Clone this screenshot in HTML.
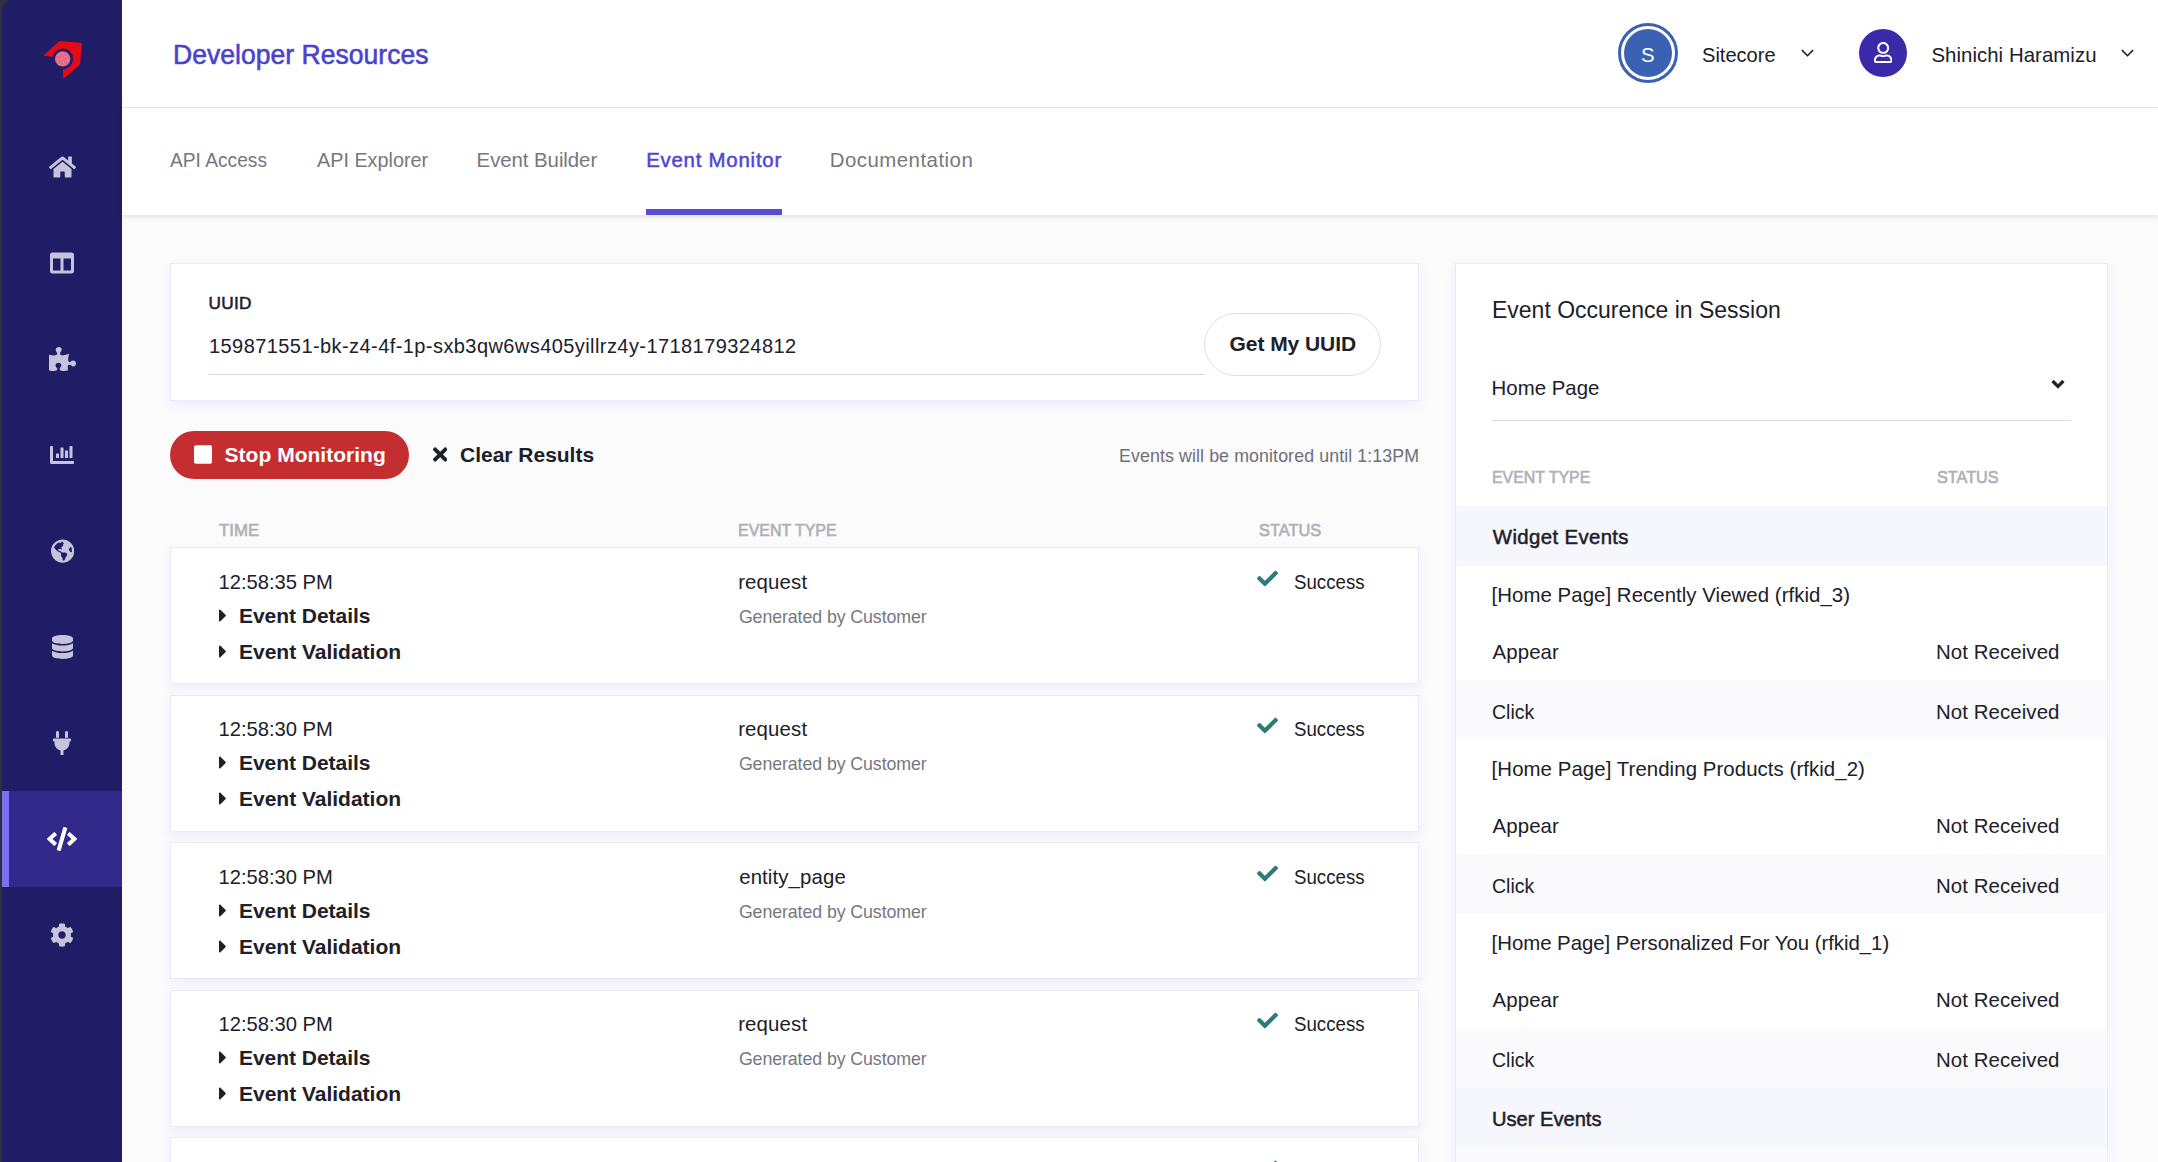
<!DOCTYPE html>
<html lang="en">
<head>
<meta charset="utf-8">
<title>Developer Resources - Event Monitor</title>
<style>
*{box-sizing:border-box;margin:0;padding:0}
html,body{width:2158px;height:1162px;overflow:hidden}
body{position:relative;background:#fbfbfc;font-family:"Liberation Sans",sans-serif;color:#1f1f29}
a{text-decoration:none}
h1,h2{font-weight:400}
.t{position:absolute;white-space:nowrap;display:block}
#edge{position:absolute;left:0;top:0;width:12px;height:1162px;background:#2e303e}
#side{position:absolute;left:2px;top:0;width:120px;height:1162px;background:#211c66;clip-path:polygon(0 9px,1px 6px,3px 3.4px,5.4px 1.4px,8px 0,100% 0,100% 100%,0 100%)}
#side ul{list-style:none}
#side .act{position:absolute;left:0;top:791px;width:120px;height:96px;background:#32298a;border-left:7px solid #7c6ff1}
#side svg{fill:#c6c4dc}
#side svg.on{fill:#fff}
#hdr{position:absolute;left:122px;top:0;width:2036px;height:108px;background:#fff;border-bottom:1px solid #e9e9ea}
#tabs{position:absolute;left:122px;top:108px;width:2036px;height:107px;background:#fff;box-shadow:0 2px 5px rgba(0,0,0,.11)}
#tabs .bar{position:absolute;left:524px;top:101px;width:136px;height:6px;background:#574bd8}
.card{position:absolute;background:#fff;border:1px solid #ebeafa;box-shadow:0 4px 10px rgba(110,100,230,.09)}
.ring{position:absolute;left:1496px;top:23px;width:60px;height:60px;border-radius:50%;border:3px solid #3b61b3;background:#fff}
.ring i{position:absolute;left:3px;top:3px;width:48px;height:48px;border-radius:50%;background:#3b61b3}
.uav{position:absolute;left:1737px;top:29px;width:48px;height:48px;border-radius:50%;background:#3a29a8}
.line{position:absolute;height:1px;background:#d9d9de}
.pill{position:absolute;border-radius:40px}
.stripe{position:absolute;left:0;width:651px}
</style>
</head>
<body>
<div id="edge"></div>
<nav id="side">
<div class="act"></div>
<svg viewBox="0 0 120 108" style="position:absolute;left:0;top:0;width:120px;height:108px" aria-hidden="true"><polygon points="41.4,55.4 57.3,41 79.9,43.1 78.1,64.5 61.3,78.9 60.7,68 60.7,58.9 50,56.8" fill="#e60a17"/><circle cx="60.7" cy="58.9" r="10.5" fill="#211c66"/><circle cx="60.7" cy="58.9" r="7.7" fill="#e36c8b"/><g fill="#f5c24a"><circle cx="60.5" cy="53.4" r=".5"/><circle cx="56.6" cy="55.6" r=".5"/><circle cx="63.5" cy="56.5" r=".5"/><circle cx="59.5" cy="58.5" r=".5"/><circle cx="55.5" cy="60.4" r=".5"/><circle cx="65.5" cy="60.4" r=".5"/><circle cx="61.5" cy="62.5" r=".5"/><circle cx="57.5" cy="64.6" r=".5"/></g></svg>
<ul>
<li><svg viewBox="0 0 576 512" style="position:absolute;left:46.90px;top:155.00px;width:27.00px;height:24.00px" aria-hidden="true"><path d="M280.37 148.26L96 300.11V464a16 16 0 0 0 16 16l112.06-.29a16 16 0 0 0 15.92-16V368a16 16 0 0 1 16-16h64a16 16 0 0 1 16 16v95.64a16 16 0 0 0 16 16.05L464 480a16 16 0 0 0 16-16V300L295.67 148.26a12.19 12.19 0 0 0-15.3 0zM571.6 251.47L488 182.56V44.05a12 12 0 0 0-12-12h-56a12 12 0 0 0-12 12v72.61L318.47 43a48 48 0 0 0-61 0L4.34 251.47a12 12 0 0 0-1.6 16.9l25.5 31A12 12 0 0 0 45.15 301l235.22-193.74a12.19 12.19 0 0 1 15.3 0L530.9 301a12 12 0 0 0 16.9-1.6l25.5-31a12 12 0 0 0-1.7-16.93z"/></svg></li>
<li><svg viewBox="0 0 512 512" style="position:absolute;left:48.40px;top:251.00px;width:24.00px;height:24.00px" aria-hidden="true"><path d="M464 32H48C21.49 32 0 53.49 0 80v352c0 26.51 21.49 48 48 48h416c26.51 0 48-21.49 48-48V80c0-26.51-21.49-48-48-48zM224 416H64V160h160v256zm224 0H288V160h160v256z"/></svg></li>
<li><svg viewBox="0 0 576 512" style="position:absolute;left:46.90px;top:347.00px;width:27.00px;height:24.00px" aria-hidden="true"><path d="M519.442 288.651c-41.519 0-59.5 31.593-82.058 31.593C377.409 320.244 432 144 432 144s-196.288 80-196.288-3.297c0-35.827 36.288-46.25 36.288-85.985C272 19.216 243.885 0 210.539 0c-34.654 0-66.366 18.891-66.366 56.346 0 41.364 31.711 59.277 31.711 81.75C175.885 207.719 0 166.758 0 166.758v333.237s178.635 41.047 178.635-28.662c0-22.473-40-40.107-40-81.471 0-37.456 29.25-56.346 63.577-56.346 33.673 0 61.788 19.216 61.788 54.717 0 39.735-36.288 50.158-36.288 85.985 0 60.803 129.675 25.73 181.23 25.73 0 0-34.725-120.101 25.827-120.101 35.962 0 46.423 36.152 86.308 36.152C556.712 416 576 387.99 576 354.443c0-34.199-18.962-65.792-56.558-65.792z"/></svg></li>
<li><svg viewBox="0 0 512 512" style="position:absolute;left:48.40px;top:443.00px;width:24.00px;height:24.00px" aria-hidden="true"><path d="M332.8 320h38.4c6.4 0 12.8-6.4 12.8-12.8V172.8c0-6.4-6.4-12.8-12.8-12.8h-38.4c-6.4 0-12.8 6.4-12.8 12.8v134.4c0 6.4 6.4 12.8 12.8 12.8zm96 0h38.4c6.4 0 12.8-6.4 12.8-12.8V76.8c0-6.4-6.4-12.8-12.8-12.8h-38.4c-6.4 0-12.8 6.4-12.8 12.8v230.4c0 6.4 6.4 12.8 12.8 12.8zm-288 0h38.4c6.4 0 12.8-6.4 12.8-12.8v-70.4c0-6.4-6.4-12.8-12.8-12.8h-38.4c-6.4 0-12.8 6.4-12.8 12.8v70.4c0 6.4 6.4 12.8 12.8 12.8zm96 0h38.4c6.4 0 12.8-6.4 12.8-12.8V108.8c0-6.4-6.4-12.8-12.8-12.8h-38.4c-6.4 0-12.8 6.4-12.8 12.8v198.4c0 6.4 6.4 12.8 12.8 12.8zM496 384H64V80c0-8.84-7.16-16-16-16H16C7.16 64 0 71.16 0 80v336c0 17.67 14.33 32 32 32h464c8.84 0 16-7.16 16-16v-32c0-8.84-7.16-16-16-16z"/></svg></li>
<li><svg viewBox="0 0 496 512" style="position:absolute;left:48.67px;top:539.00px;width:23.25px;height:24.00px" aria-hidden="true"><path d="M248 8C111.03 8 0 119.03 0 256s111.03 248 248 248 248-111.03 248-248S384.97 8 248 8zm82.29 357.6c-3.9 3.88-7.99 7.95-11.31 11.28-2.99 3-5.1 6.7-6.17 10.71-1.51 5.66-2.73 11.38-4.77 16.87l-17.39 46.85c-13.76 3-28 4.69-42.65 4.69v-27.38c1.69-12.62-7.64-36.26-22.63-51.25-6-6-9.37-14.14-9.37-22.63v-32.01c0-11.64-6.27-22.34-16.46-27.97-14.37-7.95-34.81-19.06-48.81-26.11-11.48-5.78-22.1-13.14-31.65-21.75l-.8-.72a114.792 114.792 0 0 1-18.06-20.74c-9.38-13.77-24.66-36.42-34.59-51.14 20.47-45.5 57.36-82.04 103.2-101.89l24.01 12.01C203.48 89.74 216 82.01 216 70.11v-11.3c7.99-1.29 16.12-2.11 24.39-2.42l28.3 28.3c6.25 6.25 6.25 16.38 0 22.63L264 112l-10.34 10.34c-3.12 3.12-3.12 8.19 0 11.31l4.69 4.69c3.12 3.12 3.12 8.19 0 11.31l-8 8a8.008 8.008 0 0 1-5.66 2.34h-8.99c-2.08 0-4.08.81-5.58 2.27l-9.92 9.65a8.008 8.008 0 0 0-1.58 9.31l15.59 31.19c2.66 5.32-1.21 11.58-7.15 11.58h-5.64c-1.93 0-3.79-.7-5.24-1.96l-9.28-8.06a16.017 16.017 0 0 0-15.55-3.1l-31.17 10.39a11.95 11.95 0 0 0-8.17 11.34c0 4.53 2.56 8.66 6.61 10.69l11.08 5.54c9.41 4.71 19.79 7.16 30.31 7.16s22.59 27.29 32 32h66.75c8.49 0 16.62 3.37 22.63 9.37l13.69 13.69a30.503 30.503 0 0 1 8.93 21.57 46.536 46.536 0 0 1-13.72 32.98zM417 274.25c-5.79-1.45-10.84-5-14.15-9.97l-17.98-26.97a23.97 23.97 0 0 1 0-26.62l19.59-29.38c2.32-3.47 5.5-6.29 9.24-8.15l12.98-6.49C440.2 193.59 448 223.87 448 256c0 8.67-.74 17.16-1.82 25.54L417 274.25z"/></svg></li>
<li><svg viewBox="0 0 448 512" style="position:absolute;left:49.90px;top:635.00px;width:21.00px;height:24.00px" aria-hidden="true"><path d="M448 73.143v45.714C448 159.143 347.667 192 224 192S0 159.143 0 118.857V73.143C0 32.857 100.333 0 224 0s224 32.857 224 73.143zM448 176v102.857C448 319.143 347.667 352 224 352S0 319.143 0 278.857V176c48.125 33.143 136.208 48.572 224 48.572S399.874 209.143 448 176zm0 160v102.857C448 479.143 347.667 512 224 512S0 479.143 0 438.857V336c48.125 33.143 136.208 48.572 224 48.572S399.874 369.143 448 336z"/></svg></li>
<li><svg viewBox="0 0 384 512" style="position:absolute;left:51.40px;top:731.00px;width:18.00px;height:24.00px" aria-hidden="true"><path d="M256 144V32c0-17.673 14.327-32 32-32s32 14.327 32 32v112h-64zm112 16H16c-8.837 0-16 7.163-16 16v32c0 8.837 7.163 16 16 16h16v32c0 77.406 54.969 141.971 128 156.796V512h64v-99.204c73.031-14.825 128-79.39 128-156.796v-32h16c8.837 0 16-7.163 16-16v-32c0-8.837-7.163-16-16-16zm-240-16V32c0-17.673-14.327-32-32-32S64 14.327 64 32v112h64z"/></svg></li>
<li><svg class="on" viewBox="0 0 640 512" style="position:absolute;left:45.40px;top:827.00px;width:30.00px;height:24.00px" aria-hidden="true"><path d="M278.9 511.5l-61-17.7c-6.4-1.8-10-8.5-8.2-14.9L346.2 8.7c1.8-6.4 8.5-10 14.9-8.2l61 17.7c6.4 1.8 10 8.5 8.2 14.9L293.8 503.3c-1.9 6.4-8.5 10.1-14.9 8.2zm-114-112.2l43.5-46.4c4.6-4.9 4.3-12.7-.8-17.2L117 256l90.6-79.7c5.1-4.5 5.5-12.3.8-17.2l-43.5-46.4c-4.5-4.8-12.1-5.1-17-.5L3.8 247.2c-5.1 4.7-5.1 12.8 0 17.5l144.1 135.1c4.9 4.6 12.5 4.4 17-.5zm327.2.6l144.1-135.1c5.1-4.7 5.1-12.8 0-17.5L492.1 112.1c-4.8-4.5-12.4-4.3-17 .5L431.6 159c-4.6 4.9-4.3 12.7.8 17.2L523 256l-90.6 79.7c-5.1 4.5-5.5 12.3-.8 17.2l43.5 46.4c4.5 4.9 12.1 5.1 17 .6z"/></svg></li>
<li><svg viewBox="0 0 512 512" style="position:absolute;left:48.40px;top:923.00px;width:24.00px;height:24.00px" aria-hidden="true"><path d="M487.4 315.7l-42.6-24.6c4.3-23.2 4.3-47 0-70.2l42.6-24.6c4.9-2.8 7.1-8.6 5.5-14-11.1-35.6-30-67.8-54.7-94.6-3.8-4.1-10-5.1-14.8-2.3L380.8 110c-17.9-15.4-38.5-27.3-60.8-35.1V25.8c0-5.6-3.9-10.5-9.4-11.7-36.7-8.2-74.3-7.8-109.2 0-5.5 1.2-9.4 6.1-9.4 11.7V75c-22.2 7.9-42.8 19.8-60.8 35.1L88.7 85.5c-4.9-2.8-11-1.9-14.8 2.3-24.7 26.7-43.6 58.9-54.7 94.6-1.7 5.4.6 11.2 5.5 14L67.3 221c-4.3 23.2-4.3 47 0 70.2l-42.6 24.6c-4.9 2.8-7.1 8.6-5.5 14 11.1 35.6 30 67.8 54.7 94.6 3.8 4.1 10 5.1 14.8 2.3l42.6-24.6c17.9 15.4 38.5 27.3 60.8 35.1v49.2c0 5.6 3.9 10.5 9.4 11.7 36.7 8.2 74.3 7.8 109.2 0 5.5-1.2 9.4-6.1 9.4-11.7v-49.2c22.2-7.9 42.8-19.8 60.8-35.1l42.6 24.6c4.9 2.8 11 1.9 14.8-2.3 24.7-26.7 43.6-58.9 54.7-94.6 1.5-5.5-.7-11.3-5.6-14.1zM256 336c-44.1 0-80-35.9-80-80s35.9-80 80-80 80 35.9 80 80-35.9 80-80 80z"/></svg></li>
</ul>
</nav>
<header id="hdr">
<h1 class="t" style="left:51.30px;top:39px;font-size:27px;line-height:32px;letter-spacing:0.000px;color:#4a42cc;-webkit-text-stroke:0.55px #4a42cc;transform:scaleX(0.9842);transform-origin:0 0">Developer Resources</h1>
<div class="ring"><i></i></div>
<span class="t" style="left:1519.00px;top:43px;font-size:20.4px;line-height:24px;letter-spacing:0.000px;color:#fff">S</span>
<span class="t" style="left:1580.40px;top:43px;font-size:20.4px;line-height:24px;letter-spacing:0.000px;color:#202028;transform:scaleX(0.9844);transform-origin:0 0">Sitecore</span>
<svg viewBox="0 0 14 9" style="position:absolute;left:1678.5px;top:49px;width:13px;height:8.4px;fill:none;stroke:#1f1f29;stroke-width:1.7" aria-hidden="true"><path d="M1 1.2 7 7.2 13 1.2"/></svg>
<div class="uav"><svg viewBox="0 0 448 512" style="position:absolute;left:14.81px;top:12.90px;width:18.38px;height:21.00px;fill:#fff" aria-hidden="true"><path d="M313.6 304c-28.7 0-42.5 16-89.6 16-47.1 0-60.8-16-89.6-16C60.2 304 0 364.2 0 438.4V464c0 26.5 21.5 48 48 48h352c26.5 0 48-21.5 48-48v-25.6c0-74.2-60.2-134.4-134.4-134.4zM400 464H48v-25.6c0-47.6 38.8-86.4 86.4-86.4 14.6 0 38.3 16 89.6 16 51.7 0 74.9-16 89.6-16 47.6 0 86.4 38.8 86.4 86.4V464zM224 288c79.5 0 144-64.500 144-144S303.5 0 224 0 80 64.5 80 144s64.5 144 144 144zm0-240c52.9 0 96 43.1 96 96s-43.1 96-96 96-96-43.1-96-96 43.1-96 96-96z"/></svg></div>
<span class="t" style="left:1809.40px;top:43px;font-size:20.4px;line-height:24px;letter-spacing:0.051px;color:#202028">Shinichi Haramizu</span>
<svg viewBox="0 0 14 9" style="position:absolute;left:1998.8px;top:49px;width:13px;height:8.4px;fill:none;stroke:#1f1f29;stroke-width:1.7" aria-hidden="true"><path d="M1 1.2 7 7.2 13 1.2"/></svg>
</header>
<div id="tabs">
<a class="t" style="left:48.20px;top:40px;font-size:20.4px;line-height:24px;letter-spacing:0.000px;color:#77777e;transform:scaleX(0.9408);transform-origin:0 0">API Access</a>
<a class="t" style="left:194.90px;top:40px;font-size:20.4px;line-height:24px;letter-spacing:0.000px;color:#77777e;transform:scaleX(0.9706);transform-origin:0 0">API Explorer</a>
<a class="t" style="left:354.60px;top:40px;font-size:20.4px;line-height:24px;letter-spacing:-0.057px;color:#77777e">Event Builder</a>
<a class="t on" style="left:524.15px;top:40px;font-size:20.4px;line-height:24px;letter-spacing:0.774px;color:#4e46d6;-webkit-text-stroke:0.5px #4e46d6">Event Monitor</a>
<a class="t" style="left:707.80px;top:40px;font-size:20.4px;line-height:24px;letter-spacing:0.483px;color:#77777e">Documentation</a>
<div class="bar"></div>
</div>
<main>
<section class="card" style="left:170px;top:263px;width:1249px;height:138px">
<label class="t" style="left:37.47px;top:28px;font-size:17.2px;line-height:22px;letter-spacing:0.350px;color:#202028;-webkit-text-stroke:0.55px #202028">UUID</label>
<span class="t" style="left:38.00px;top:70px;font-size:20.0px;line-height:24px;letter-spacing:0.426px;color:#202028">159871551-bk-z4-4f-1p-sxb3qw6ws405yillrz4y-1718179324812</span>
<div class="line" style="left:38px;top:110px;width:996px"></div>
</section>
<button class="pill" style="left:1204px;top:313px;width:177px;height:63px;background:#fff;border:1px solid #dfdfe4;font:inherit;position:absolute"><span class="t" style="left:24.60px;top:17px;font-size:21px;line-height:25px;letter-spacing:-0.061px;font-weight:700;color:#202028">Get My UUID</span></button>
<button class="pill" style="left:170px;top:431px;width:239px;height:48px;background:#c52e31;border:0;font:inherit;position:absolute"><svg viewBox="0 0 448 512" style="position:absolute;left:23.91px;top:13.00px;width:18.38px;height:21.00px;fill:#fff" aria-hidden="true"><path d="M400 32H48C21.5 32 0 53.5 0 80v352c0 26.5 21.5 48 48 48h352c26.5 0 48-21.5 48-48V80c0-26.5-21.5-48-48-48z"/></svg><span class="t" style="left:54.60px;top:11px;font-size:21px;line-height:25px;letter-spacing:0.012px;font-weight:700;color:#fff">Stop Monitoring</span></button>
<svg viewBox="0 0 352 512" style="position:absolute;left:432.88px;top:444.20px;width:14.44px;height:21.00px;fill:#202028" aria-hidden="true"><path d="M242.72 256l100.07-100.07c12.28-12.28 12.28-32.19 0-44.48l-22.24-22.24c-12.28-12.28-32.19-12.28-44.48 0L176 189.28 75.93 89.21c-12.28-12.28-32.19-12.28-44.48 0L9.21 111.45c-12.28 12.28-12.28 32.19 0 44.48L109.28 256 9.210 356.07c-12.28 12.28-12.28 32.19 0 44.48l22.24 22.24c12.28 12.28 32.2 12.28 44.48 0L176 322.72l100.07 100.07c12.28 12.28 32.2 12.28 44.48 0l22.24-22.24c12.28-12.28 12.28-32.19 0-44.48L242.72 256z"/></svg>
<span class="t" style="left:460.10px;top:442px;font-size:21px;line-height:25px;letter-spacing:-0.020px;font-weight:700;color:#202028">Clear Results</span>
<span class="t" style="left:1119.00px;top:445px;font-size:17.8px;line-height:22px;letter-spacing:0.100px;color:#6e6e7a">Events will be monitored until 1:13PM</span>
<span class="t" style="left:218.92px;top:520px;font-size:17.1px;line-height:21px;letter-spacing:0.000px;color:#b0b0b8;-webkit-text-stroke:0.65px #b0b0b8;transform:scaleX(0.9859);transform-origin:0 0">TIME</span><span class="t" style="left:737.87px;top:520px;font-size:17.1px;line-height:21px;letter-spacing:0.000px;color:#b0b0b8;-webkit-text-stroke:0.65px #b0b0b8;transform:scaleX(0.9325);transform-origin:0 0">EVENT TYPE</span><span class="t" style="left:1258.81px;top:520px;font-size:17.1px;line-height:21px;letter-spacing:0.000px;color:#b0b0b8;-webkit-text-stroke:0.65px #b0b0b8;transform:scaleX(0.9594);transform-origin:0 0">STATUS</span>
<article class="card" style="left:170px;top:547px;width:1249px;height:137px">
<span class="t" style="left:47.60px;top:22px;font-size:20.2px;line-height:24px;letter-spacing:-0.026px;color:#202028">12:58:35 PM</span>
<svg viewBox="0 0 192 512" style="position:absolute;left:47.96px;top:57.30px;width:7.88px;height:21.00px;fill:#202028" aria-hidden="true"><path d="M0 384.662V127.338c0-17.818 21.543-26.741 34.142-14.142l128.662 128.662c7.81 7.81 7.81 20.474 0 28.284L34.142 398.804C21.543 411.404 0 402.48 0 384.662z"/></svg><span class="t" style="left:68.00px;top:55px;font-size:21px;line-height:25px;letter-spacing:-0.034px;font-weight:700;color:#202028">Event Details</span>
<svg viewBox="0 0 192 512" style="position:absolute;left:47.96px;top:93.30px;width:7.88px;height:21.00px;fill:#202028" aria-hidden="true"><path d="M0 384.662V127.338c0-17.818 21.543-26.741 34.142-14.142l128.662 128.662c7.81 7.81 7.81 20.474 0 28.284L34.142 398.804C21.543 411.404 0 402.48 0 384.662z"/></svg><span class="t" style="left:68.00px;top:91px;font-size:21px;line-height:25px;letter-spacing:-0.012px;font-weight:700;color:#202028">Event Validation</span>
<span class="t" style="left:567.20px;top:22px;font-size:20.4px;line-height:24px;letter-spacing:0.142px;color:#202028">request</span><span class="t" style="left:567.90px;top:58px;font-size:17.8px;line-height:22px;letter-spacing:-0.097px;color:#77777f">Generated by Customer</span>
<svg viewBox="0 0 512 512" style="position:absolute;left:1086.10px;top:19.90px;width:21.00px;height:21.00px;fill:#2d7c77" aria-hidden="true"><path d="M173.898 439.404l-166.4-166.4c-9.997-9.997-9.997-26.206 0-36.204l36.203-36.204c9.997-9.998 26.207-9.998 36.204 0L192 312.69 432.095 72.596c9.997-9.997 26.207-9.997 36.204 0l36.203 36.204c9.997 9.997 9.997 26.206 0 36.204l-294.4 294.401c-9.998 9.997-26.207 9.997-36.204-.001z"/></svg><span class="t" style="left:1123.00px;top:21px;font-size:20.6px;line-height:25px;letter-spacing:0.000px;color:#202028;transform:scaleX(0.9067);transform-origin:0 0">Success</span>
</article>
<article class="card" style="left:170px;top:695px;width:1249px;height:137px">
<span class="t" style="left:47.60px;top:21px;font-size:20.2px;line-height:24px;letter-spacing:-0.026px;color:#202028">12:58:30 PM</span>
<svg viewBox="0 0 192 512" style="position:absolute;left:47.96px;top:56.30px;width:7.88px;height:21.00px;fill:#202028" aria-hidden="true"><path d="M0 384.662V127.338c0-17.818 21.543-26.741 34.142-14.142l128.662 128.662c7.81 7.81 7.81 20.474 0 28.284L34.142 398.804C21.543 411.404 0 402.48 0 384.662z"/></svg><span class="t" style="left:68.00px;top:54px;font-size:21px;line-height:25px;letter-spacing:-0.034px;font-weight:700;color:#202028">Event Details</span>
<svg viewBox="0 0 192 512" style="position:absolute;left:47.96px;top:92.30px;width:7.88px;height:21.00px;fill:#202028" aria-hidden="true"><path d="M0 384.662V127.338c0-17.818 21.543-26.741 34.142-14.142l128.662 128.662c7.81 7.81 7.81 20.474 0 28.284L34.142 398.804C21.543 411.404 0 402.48 0 384.662z"/></svg><span class="t" style="left:68.00px;top:90px;font-size:21px;line-height:25px;letter-spacing:-0.012px;font-weight:700;color:#202028">Event Validation</span>
<span class="t" style="left:567.20px;top:21px;font-size:20.4px;line-height:24px;letter-spacing:0.142px;color:#202028">request</span><span class="t" style="left:567.90px;top:57px;font-size:17.8px;line-height:22px;letter-spacing:-0.097px;color:#77777f">Generated by Customer</span>
<svg viewBox="0 0 512 512" style="position:absolute;left:1086.10px;top:18.90px;width:21.00px;height:21.00px;fill:#2d7c77" aria-hidden="true"><path d="M173.898 439.404l-166.4-166.4c-9.997-9.997-9.997-26.206 0-36.204l36.203-36.204c9.997-9.998 26.207-9.998 36.204 0L192 312.69 432.095 72.596c9.997-9.997 26.207-9.997 36.204 0l36.203 36.204c9.997 9.997 9.997 26.206 0 36.204l-294.4 294.401c-9.998 9.997-26.207 9.997-36.204-.001z"/></svg><span class="t" style="left:1123.00px;top:20px;font-size:20.6px;line-height:25px;letter-spacing:0.000px;color:#202028;transform:scaleX(0.9067);transform-origin:0 0">Success</span>
</article>
<article class="card" style="left:170px;top:842px;width:1249px;height:137px">
<span class="t" style="left:47.60px;top:22px;font-size:20.2px;line-height:24px;letter-spacing:-0.026px;color:#202028">12:58:30 PM</span>
<svg viewBox="0 0 192 512" style="position:absolute;left:47.96px;top:57.30px;width:7.88px;height:21.00px;fill:#202028" aria-hidden="true"><path d="M0 384.662V127.338c0-17.818 21.543-26.741 34.142-14.142l128.662 128.662c7.81 7.81 7.81 20.474 0 28.284L34.142 398.804C21.543 411.404 0 402.48 0 384.662z"/></svg><span class="t" style="left:68.00px;top:55px;font-size:21px;line-height:25px;letter-spacing:-0.034px;font-weight:700;color:#202028">Event Details</span>
<svg viewBox="0 0 192 512" style="position:absolute;left:47.96px;top:93.30px;width:7.88px;height:21.00px;fill:#202028" aria-hidden="true"><path d="M0 384.662V127.338c0-17.818 21.543-26.741 34.142-14.142l128.662 128.662c7.81 7.81 7.81 20.474 0 28.284L34.142 398.804C21.543 411.404 0 402.48 0 384.662z"/></svg><span class="t" style="left:68.00px;top:91px;font-size:21px;line-height:25px;letter-spacing:-0.012px;font-weight:700;color:#202028">Event Validation</span>
<span class="t" style="left:568.20px;top:22px;font-size:20.4px;line-height:24px;letter-spacing:0.110px;color:#202028">entity_page</span><span class="t" style="left:567.90px;top:58px;font-size:17.8px;line-height:22px;letter-spacing:-0.097px;color:#77777f">Generated by Customer</span>
<svg viewBox="0 0 512 512" style="position:absolute;left:1086.10px;top:19.90px;width:21.00px;height:21.00px;fill:#2d7c77" aria-hidden="true"><path d="M173.898 439.404l-166.4-166.4c-9.997-9.997-9.997-26.206 0-36.204l36.203-36.204c9.997-9.998 26.207-9.998 36.204 0L192 312.69 432.095 72.596c9.997-9.997 26.207-9.997 36.204 0l36.203 36.204c9.997 9.997 9.997 26.206 0 36.204l-294.4 294.401c-9.998 9.997-26.207 9.997-36.204-.001z"/></svg><span class="t" style="left:1123.00px;top:21px;font-size:20.6px;line-height:25px;letter-spacing:0.000px;color:#202028;transform:scaleX(0.9067);transform-origin:0 0">Success</span>
</article>
<article class="card" style="left:170px;top:990px;width:1249px;height:137px">
<span class="t" style="left:47.60px;top:21px;font-size:20.2px;line-height:24px;letter-spacing:-0.026px;color:#202028">12:58:30 PM</span>
<svg viewBox="0 0 192 512" style="position:absolute;left:47.96px;top:56.30px;width:7.88px;height:21.00px;fill:#202028" aria-hidden="true"><path d="M0 384.662V127.338c0-17.818 21.543-26.741 34.142-14.142l128.662 128.662c7.81 7.81 7.81 20.474 0 28.284L34.142 398.804C21.543 411.404 0 402.48 0 384.662z"/></svg><span class="t" style="left:68.00px;top:54px;font-size:21px;line-height:25px;letter-spacing:-0.034px;font-weight:700;color:#202028">Event Details</span>
<svg viewBox="0 0 192 512" style="position:absolute;left:47.96px;top:92.30px;width:7.88px;height:21.00px;fill:#202028" aria-hidden="true"><path d="M0 384.662V127.338c0-17.818 21.543-26.741 34.142-14.142l128.662 128.662c7.81 7.81 7.81 20.474 0 28.284L34.142 398.804C21.543 411.404 0 402.48 0 384.662z"/></svg><span class="t" style="left:68.00px;top:90px;font-size:21px;line-height:25px;letter-spacing:-0.012px;font-weight:700;color:#202028">Event Validation</span>
<span class="t" style="left:567.20px;top:21px;font-size:20.4px;line-height:24px;letter-spacing:0.142px;color:#202028">request</span><span class="t" style="left:567.90px;top:57px;font-size:17.8px;line-height:22px;letter-spacing:-0.097px;color:#77777f">Generated by Customer</span>
<svg viewBox="0 0 512 512" style="position:absolute;left:1086.10px;top:18.90px;width:21.00px;height:21.00px;fill:#2d7c77" aria-hidden="true"><path d="M173.898 439.404l-166.4-166.4c-9.997-9.997-9.997-26.206 0-36.204l36.203-36.204c9.997-9.998 26.207-9.998 36.204 0L192 312.69 432.095 72.596c9.997-9.997 26.207-9.997 36.204 0l36.203 36.204c9.997 9.997 9.997 26.206 0 36.204l-294.4 294.401c-9.998 9.997-26.207 9.997-36.204-.001z"/></svg><span class="t" style="left:1123.00px;top:20px;font-size:20.6px;line-height:25px;letter-spacing:0.000px;color:#202028;transform:scaleX(0.9067);transform-origin:0 0">Success</span>
</article>
<article class="card" style="left:170px;top:1137px;width:1249px;height:137px">
<span class="t" style="left:47.60px;top:22px;font-size:20.2px;line-height:24px;letter-spacing:-0.026px;color:#202028">12:58:30 PM</span>
<svg viewBox="0 0 192 512" style="position:absolute;left:47.96px;top:57.30px;width:7.88px;height:21.00px;fill:#202028" aria-hidden="true"><path d="M0 384.662V127.338c0-17.818 21.543-26.741 34.142-14.142l128.662 128.662c7.81 7.81 7.81 20.474 0 28.284L34.142 398.804C21.543 411.404 0 402.48 0 384.662z"/></svg><span class="t" style="left:68.00px;top:55px;font-size:21px;line-height:25px;letter-spacing:-0.034px;font-weight:700;color:#202028">Event Details</span>
<svg viewBox="0 0 192 512" style="position:absolute;left:47.96px;top:93.30px;width:7.88px;height:21.00px;fill:#202028" aria-hidden="true"><path d="M0 384.662V127.338c0-17.818 21.543-26.741 34.142-14.142l128.662 128.662c7.81 7.81 7.81 20.474 0 28.284L34.142 398.804C21.543 411.404 0 402.48 0 384.662z"/></svg><span class="t" style="left:68.00px;top:91px;font-size:21px;line-height:25px;letter-spacing:-0.012px;font-weight:700;color:#202028">Event Validation</span>
<span class="t" style="left:567.20px;top:22px;font-size:20.4px;line-height:24px;letter-spacing:0.142px;color:#202028">request</span><span class="t" style="left:567.90px;top:58px;font-size:17.8px;line-height:22px;letter-spacing:-0.097px;color:#77777f">Generated by Customer</span>
<svg viewBox="0 0 512 512" style="position:absolute;left:1086.10px;top:19.90px;width:21.00px;height:21.00px;fill:#2d7c77" aria-hidden="true"><path d="M173.898 439.404l-166.4-166.4c-9.997-9.997-9.997-26.206 0-36.204l36.203-36.204c9.997-9.998 26.207-9.998 36.204 0L192 312.69 432.095 72.596c9.997-9.997 26.207-9.997 36.204 0l36.203 36.204c9.997 9.997 9.997 26.206 0 36.204l-294.4 294.401c-9.998 9.997-26.207 9.997-36.204-.001z"/></svg><span class="t" style="left:1123.00px;top:21px;font-size:20.6px;line-height:25px;letter-spacing:0.000px;color:#202028;transform:scaleX(0.9067);transform-origin:0 0">Success</span>
</article>
<aside class="card" style="left:1455px;top:263px;width:653px;height:920px">
<div class="stripe" style="top:242px;height:60px;background:#f6f6fd"></div>
<div class="stripe" style="top:416px;height:60px;background:#fafafd"></div>
<div class="stripe" style="top:590px;height:60px;background:#fafafd"></div>
<div class="stripe" style="top:764px;height:60px;background:#fafafd"></div>
<div class="stripe" style="top:824px;height:60px;background:#f6f6fd"></div>
<div class="stripe" style="top:884px;height:42px;background:#fafafd"></div>
<h2 class="t" style="left:35.61px;top:32px;font-size:23.3px;line-height:28px;letter-spacing:0.000px;color:#202028;transform:scaleX(0.9866);transform-origin:0 0">Event Occurence in Session</h2>
<span class="t" style="left:35.60px;top:112px;font-size:20.4px;line-height:24px;letter-spacing:0.008px;color:#202028">Home Page</span>
<svg viewBox="0 0 20 14" style="position:absolute;left:592.1px;top:114px;width:20px;height:14px" aria-hidden="true"><path d="M4.57 2.97 10 8.4 15.43 2.97" fill="none" stroke="#222227" stroke-width="3.3" stroke-linejoin="miter"/></svg>
<div class="line" style="left:36px;top:156px;width:579px"></div>
<span class="t" style="left:35.97px;top:203px;font-size:17.1px;line-height:21px;letter-spacing:0.000px;color:#b0b0b8;-webkit-text-stroke:0.65px #b0b0b8;transform:scaleX(0.9287);transform-origin:0 0">EVENT TYPE</span><span class="t" style="left:480.71px;top:203px;font-size:17.1px;line-height:21px;letter-spacing:0.000px;color:#b0b0b8;-webkit-text-stroke:0.65px #b0b0b8;transform:scaleX(0.9502);transform-origin:0 0">STATUS</span>
<span class="t" style="left:36.85px;top:261px;font-size:20.4px;line-height:24px;letter-spacing:0.353px;color:#202028;-webkit-text-stroke:0.5px #202028">Widget Events</span>
<span class="t" style="left:35.60px;top:319px;font-size:20.4px;line-height:24px;letter-spacing:0.049px;color:#202028">[Home Page] Recently Viewed (rfkid_3)</span>
<span class="t" style="left:36.60px;top:376px;font-size:20.4px;line-height:24px;letter-spacing:0.088px;color:#202028">Appear</span><span class="t" style="left:479.90px;top:376px;font-size:20.4px;line-height:24px;letter-spacing:0.103px;color:#202028">Not Received</span>
<span class="t" style="left:35.64px;top:436px;font-size:20.4px;line-height:24px;letter-spacing:0.000px;color:#202028;transform:scaleX(0.9572);transform-origin:0 0">Click</span><span class="t" style="left:479.90px;top:436px;font-size:20.4px;line-height:24px;letter-spacing:0.103px;color:#202028">Not Received</span>
<span class="t" style="left:35.60px;top:493px;font-size:20.4px;line-height:24px;letter-spacing:0.071px;color:#202028">[Home Page] Trending Products (rfkid_2)</span>
<span class="t" style="left:36.60px;top:550px;font-size:20.4px;line-height:24px;letter-spacing:0.088px;color:#202028">Appear</span><span class="t" style="left:479.90px;top:550px;font-size:20.4px;line-height:24px;letter-spacing:0.103px;color:#202028">Not Received</span>
<span class="t" style="left:35.64px;top:610px;font-size:20.4px;line-height:24px;letter-spacing:0.000px;color:#202028;transform:scaleX(0.9572);transform-origin:0 0">Click</span><span class="t" style="left:479.90px;top:610px;font-size:20.4px;line-height:24px;letter-spacing:0.103px;color:#202028">Not Received</span>
<span class="t" style="left:35.60px;top:667px;font-size:20.4px;line-height:24px;letter-spacing:-0.033px;color:#202028">[Home Page] Personalized For You (rfkid_1)</span>
<span class="t" style="left:36.60px;top:724px;font-size:20.4px;line-height:24px;letter-spacing:0.088px;color:#202028">Appear</span><span class="t" style="left:479.90px;top:724px;font-size:20.4px;line-height:24px;letter-spacing:0.103px;color:#202028">Not Received</span>
<span class="t" style="left:35.64px;top:784px;font-size:20.4px;line-height:24px;letter-spacing:0.000px;color:#202028;transform:scaleX(0.9572);transform-origin:0 0">Click</span><span class="t" style="left:479.90px;top:784px;font-size:20.4px;line-height:24px;letter-spacing:0.103px;color:#202028">Not Received</span>
<span class="t" style="left:35.86px;top:843px;font-size:20.4px;line-height:24px;letter-spacing:0.000px;color:#202028;-webkit-text-stroke:0.5px #202028;transform:scaleX(0.9859);transform-origin:0 0">User Events</span>
</aside>
</main>
</body>
</html>
